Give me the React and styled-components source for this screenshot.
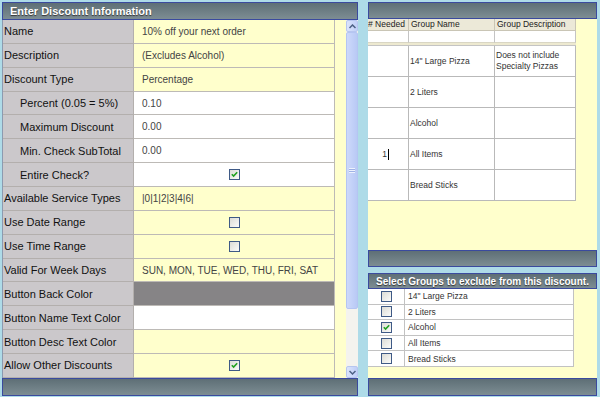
import React from "react";
import styled, { createGlobalStyle } from "styled-components";

const Global = createGlobalStyle`
  html, body { margin: 0; padding: 0; background: #aedbe8; overflow: hidden; }
  body { font-family: "Liberation Sans", Arial, sans-serif; }
`;

const Page = styled.div`
  display: flex;
  gap: 10px;
  padding: 2px 3px 1px 2px;
  width: 600px;
  height: 397px;
  box-sizing: border-box;
`;

const Panel = styled.div`
  display: flex;
  flex-direction: column;
  width: ${(p) => p.$w}px;
  height: ${(p) => (p.$h ? p.$h + "px" : "100%")};
  background: #ffffcc;
  box-sizing: border-box;
`;

const Bar = styled.div`
  height: ${(p) => p.$h}px;
  flex: none;
  box-sizing: border-box;
  border: 1px solid #3a4a9e;
  background: linear-gradient(#5e6f76, #7d8d93);
  color: #fff;
  font-weight: bold;
  font-size: ${(p) => p.$fs || 11}px;
  display: flex;
  align-items: center;
  justify-content: ${(p) => (p.$center ? "center" : "flex-start")};
  padding-left: ${(p) => (p.$center ? 0 : 7)}px;
  text-shadow: 0 1px 1px #333;
  white-space: nowrap;
`;

const Body = styled.div`
  flex: 1;
  display: flex;
  min-height: 0;
  background: #ffffcc;
`;

const FormGrid = styled.div`
  display: grid;
  grid-template-columns: 131px 201px;
  grid-auto-rows: 23.87px;
  width: 333px;
  align-self: flex-start;
  border-left: 1px solid #8c9ab0;
`;

const Label = styled.div`
  background: #cbc8cb;
  border-bottom: 1px solid #b3afad;
  border-right: 1px solid #b3afad;
  display: flex;
  align-items: center;
  padding-left: ${(p) => (p.$indent ? 17 : 1)}px;
  font-size: 11px;
  color: #111;
  white-space: nowrap;
`;

const Value = styled.div`
  background: ${(p) => p.$bg};
  border-bottom: 1px solid #bdbab6;
  border-right: 1px solid #bdbab6;
  display: flex;
  align-items: center;
  justify-content: ${(p) => (p.$center ? "center" : "flex-start")};
  padding-left: ${(p) => (p.$center ? 0 : 8)}px;
  font-size: 10px;
  color: #444;
  white-space: nowrap;
`;

const Gutter = styled.div`
  width: ${(p) => p.$w}px;
  flex: none;
`;

const Scroll = styled.div`
  width: 12px;
  flex: none;
  display: flex;
  flex-direction: column;
  background: #f4f3ee;
`;

const ScrollBtn = styled.div`
  height: 12px;
  flex: none;
  box-sizing: border-box;
  border: 1px solid #b7c6f0;
  border-radius: 2px;
  background: linear-gradient(90deg, #dbe4fc, #c0cff7);
  display: flex;
  align-items: center;
  justify-content: center;
`;

const Thumb = styled.div`
  height: 277px;
  flex: none;
  box-sizing: border-box;
  border: 1px solid #b5c5f2;
  border-radius: 2px;
  background: linear-gradient(90deg, #cdd9fb, #b9c9f5);
  display: flex;
  align-items: center;
  justify-content: center;
`;

const Track = styled.div`
  flex: 1;
`;

const Grip = styled.div`
  width: 6px;
  height: 5px;
  background: repeating-linear-gradient(#eef2fd 0 1px, #9fb2e6 1px 2px);
`;

const Column = styled.div`
  display: flex;
  flex-direction: column;
  gap: 6px;
  width: 229px;
`;

const GroupTable = styled.div`
  display: grid;
  grid-template-columns: 41px 86px 81px;
  width: 208px;
  align-self: flex-start;
  background: #fff;
  font-size: 8.5px;
  color: #333;
`;

const Th = styled.div`
  height: 12px;
  box-sizing: border-box;
  background: #ece9d8;
  border-right: 1px solid #c9c5b5;
  border-bottom: 1px solid #c9c5b5;
  padding-left: ${(p) => (p.$tight ? 0 : 2)}px;
  font-size: 8.5px;
  color: #222;
  line-height: 11px;
  white-space: nowrap;
  overflow: hidden;
`;

const Blank = styled.div`
  height: 12px;
  box-sizing: border-box;
  border-right: 1px solid #c4c4c4;
  border-bottom: 1px solid #d9d6c4;
`;

const Sep = styled.div`
  grid-column: 1 / -1;
  height: 3px;
  background: #ede9d0;
  border-bottom: 1px solid #c4c4c4;
  box-sizing: border-box;
`;

const Td = styled.div`
  height: 31px;
  box-sizing: border-box;
  border-right: 1px solid #b9b9b9;
  border-bottom: 1px solid #b9b9b9;
  display: flex;
  align-items: center;
  justify-content: ${(p) => (p.$right ? "flex-end" : "flex-start")};
  padding: ${(p) => (p.$right ? "0 19px 0 0" : "0 0 0 1px")};
  line-height: 11px;
  white-space: pre-line;
`;

const Caret = styled.span`
  display: inline-block;
  width: 1px;
  height: 11px;
  background: #000;
  margin-left: 1px;
`;

const ExTable = styled.div`
  display: grid;
  grid-template-columns: 37px 169px;
  grid-auto-rows: 15.6px;
  width: 206px;
  align-self: flex-start;
  background: #fff;
  font-size: 8.5px;
  color: #333;
`;

const ExCell = styled.div`
  box-sizing: border-box;
  border-right: 1px solid #c2c2c2;
  border-bottom: 1px solid #c2c2c2;
  display: flex;
  align-items: center;
  justify-content: ${(p) => (p.$center ? "center" : "flex-start")};
  padding-left: ${(p) => (p.$center ? 0 : 3)}px;
`;

const Box = styled.span`
  width: 11px;
  height: 11px;
  box-sizing: border-box;
  border: 1px solid #3f5a86;
  background: linear-gradient(135deg, #dcdcd6, #fbfbf9);
  display: inline-flex;
  align-items: center;
  justify-content: center;
`;

const Check = ({ on }) => (
  <Box>
    {on && (
      <svg width="7" height="7" viewBox="0 0 7 7">
        <path d="M0.8 3.2 L2.6 5 L6.2 1.2" stroke="#21a121" strokeWidth="1.6" fill="none" />
      </svg>
    )}
  </Box>
);

const Arrow = ({ up }) => (
  <svg width="7" height="5" viewBox="0 0 7 5">
    <path d={up ? "M0.5 4 L3.5 1 L6.5 4" : "M0.5 1 L3.5 4 L6.5 1"} stroke="#4d6185" strokeWidth="1.5" fill="none" />
  </svg>
);

const YELLOW = "#ffffcc";
const WHITE = "#ffffff";

const rows = [
  { l: "Name", v: "10% off your next order", bg: YELLOW },
  { l: "Description", v: "(Excludes Alcohol)", bg: YELLOW },
  { l: "Discount Type", v: "Percentage", bg: YELLOW },
  { l: "Percent (0.05 = 5%)", v: "0.10", bg: WHITE, indent: true },
  { l: "Maximum Discount", v: "0.00", bg: WHITE, indent: true },
  { l: "Min. Check SubTotal", v: "0.00", bg: WHITE, indent: true },
  { l: "Entire Check?", check: true, on: true, bg: WHITE, indent: true },
  { l: "Available Service Types", v: "|0|1|2|3|4|6|", bg: YELLOW },
  { l: "Use Date Range", check: true, on: false, bg: YELLOW },
  { l: "Use Time Range", check: true, on: false, bg: YELLOW },
  { l: "Valid For Week Days", v: "SUN, MON, TUE, WED, THU, FRI, SAT", bg: YELLOW },
  { l: "Button Back Color", v: "", bg: "#868486" },
  { l: "Button Name Text Color", v: "", bg: WHITE },
  { l: "Button Desc Text Color", v: "", bg: YELLOW },
  { l: "Allow Other Discounts", check: true, on: true, bg: YELLOW },
];

const groups = [
  { n: "", name: "14\" Large Pizza", d: "Does not include\nSpecialty Pizzas" },
  { n: "", name: "2 Liters", d: "" },
  { n: "", name: "Alcohol", d: "" },
  { n: "1", name: "All Items", d: "", caret: true },
  { n: "", name: "Bread Sticks", d: "" },
];

const excl = [
  { name: "14\" Large Pizza", on: false },
  { name: "2 Liters", on: false },
  { name: "Alcohol", on: true },
  { name: "All Items", on: false },
  { name: "Bread Sticks", on: false },
];

export default function App() {
  return (
    <>
      <Global />
      <Page>
        <Panel $w={356}>
          <Bar $h={18}>Enter Discount Information</Bar>
          <Body>
            <FormGrid>
              {rows.map((r) => (
                <React.Fragment key={r.l}>
                  <Label $indent={r.indent}>{r.l}</Label>
                  <Value $bg={r.bg} $center={r.check}>
                    {r.check ? <Check on={r.on} /> : r.v}
                  </Value>
                </React.Fragment>
              ))}
            </FormGrid>
            <Gutter $w={11} />
            <Scroll>
              <ScrollBtn>
                <Arrow up />
              </ScrollBtn>
              <Thumb>
                <Grip />
              </Thumb>
              <Track />
              <ScrollBtn>
                <Arrow />
              </ScrollBtn>
            </Scroll>
            <Gutter $w={0} />
          </Body>
          <Bar $h={18} />
        </Panel>
        <Column>
          <Panel $w={229} $h={265}>
            <Bar $h={17} />
            <Body>
              <GroupTable>
                <Th $tight># Needed</Th>
                <Th>Group Name</Th>
                <Th>Group Description</Th>
                <Blank />
                <Blank />
                <Blank />
                <Sep />
                {groups.map((g) => (
                  <React.Fragment key={g.name}>
                    <Td $right>
                      {g.n}
                      {g.caret && <Caret />}
                    </Td>
                    <Td>{g.name}</Td>
                    <Td>{g.d}</Td>
                  </React.Fragment>
                ))}
              </GroupTable>
            </Body>
            <Bar $h={17} />
          </Panel>
          <Panel $w={229} $h={123}>
            <Bar $h={16} $fs={10} $center>Select Groups to exclude from this discount.</Bar>
            <Body>
              <ExTable>
                {excl.map((e) => (
                  <React.Fragment key={e.name}>
                    <ExCell $center>
                      <Check on={e.on} />
                    </ExCell>
                    <ExCell>{e.name}</ExCell>
                  </React.Fragment>
                ))}
              </ExTable>
            </Body>
            <Bar $h={18} />
          </Panel>
        </Column>
      </Page>
    </>
  );
}
